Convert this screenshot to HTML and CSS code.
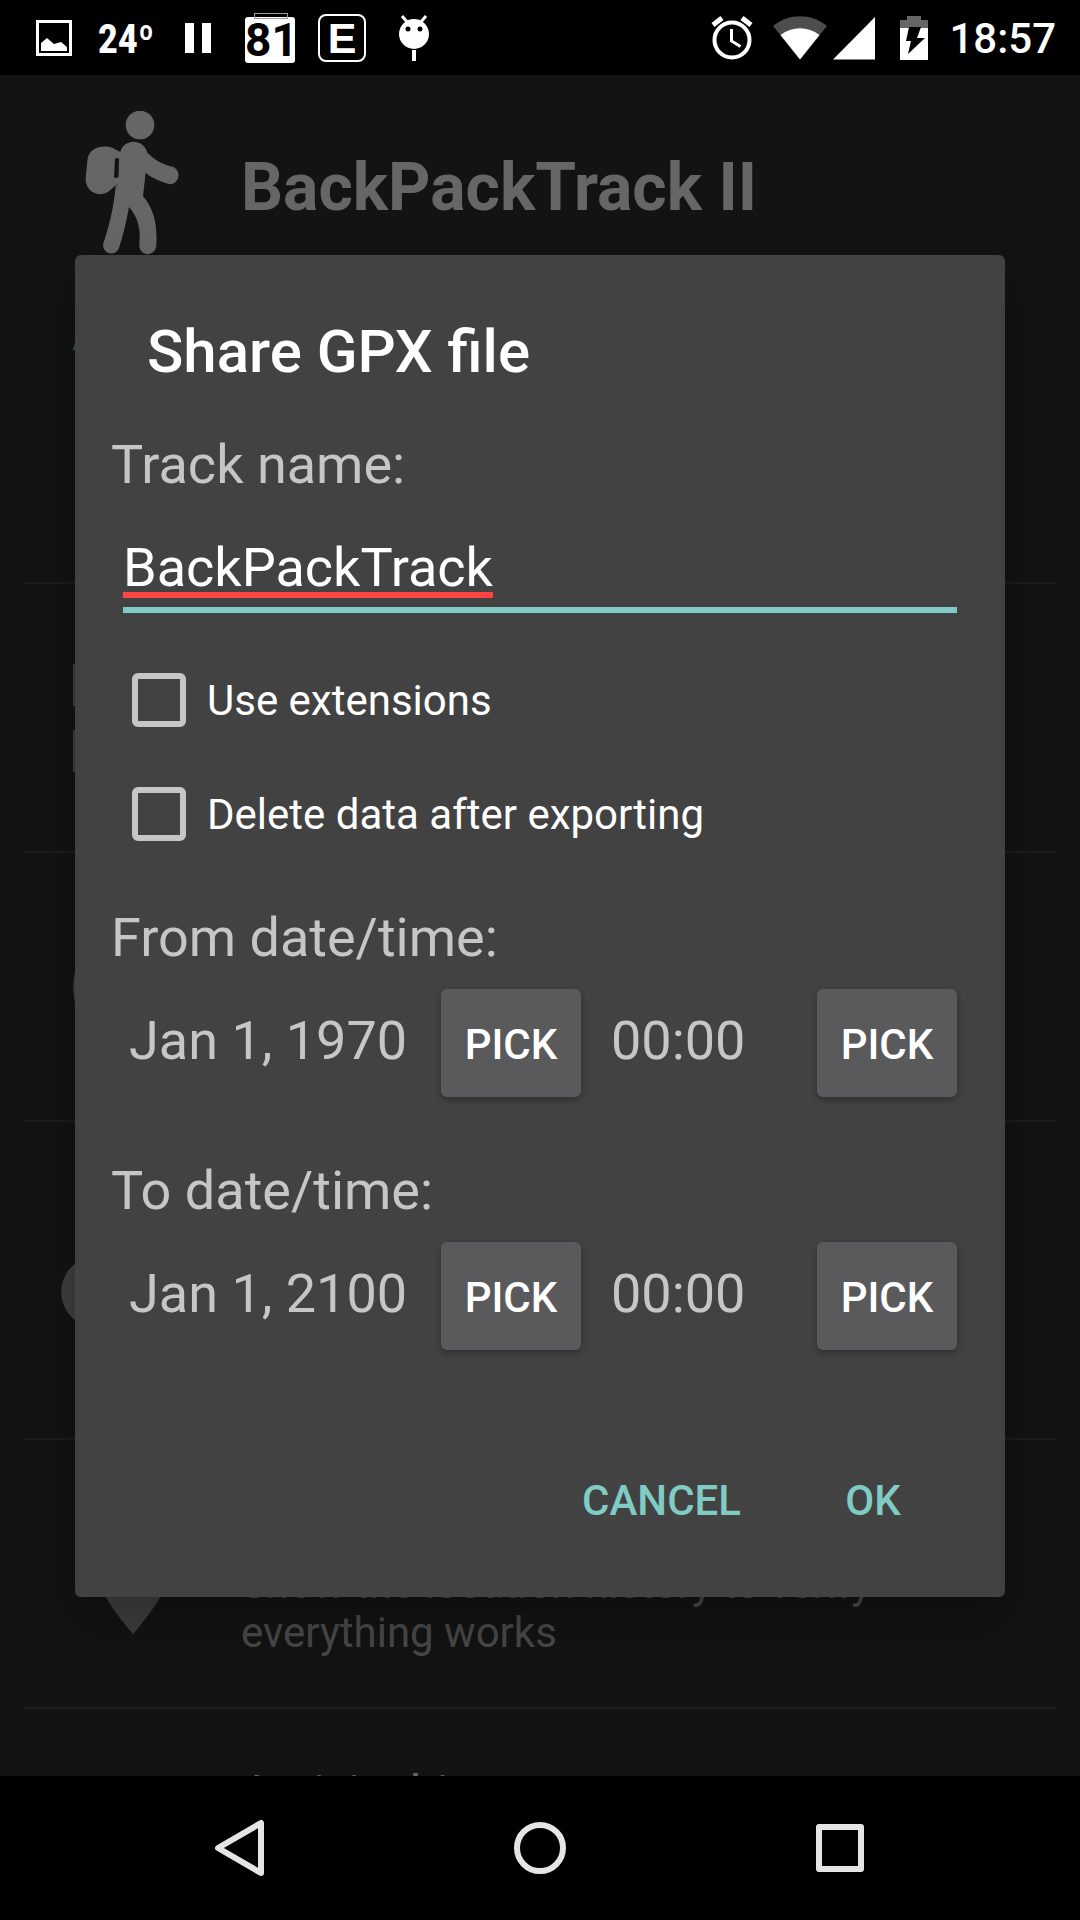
FILE: index.html
```html
<!DOCTYPE html>
<html lang="en">
<head>
<meta charset="utf-8">
<meta name="viewport" content="width=device-width, initial-scale=1">
<title>BackPackTrack II</title>
<link rel="stylesheet" href="styles.css">
</head>
<body>
<div class="screen">
  <header class="status">
    <div class="notifications">
      <svg class="slot" viewBox="0 0 72 72"><path d="M19.500 19.500h33v33h-33z" fill="none" stroke="#fff" stroke-width="3"/><path d="M23 49V41l6-5 7 6 7-2 6 5v4z" fill="#fff"/></svg>
      <span class="slot temperature">24º</span>
      <svg class="slot" viewBox="0 0 72 72"><path d="M23 21h9v30h-9zM40 21h9v30h-9z" fill="#fff"/></svg>
      <span class="slot"><span class="battery-level">81</span></span>
      <span class="slot"><span class="edge">E</span></span>
      <svg class="slot" viewBox="0 0 72 72"><path d="M24 14l6 7M48 14l-6 7" stroke="#fff" stroke-width="3"/><path d="M36 48v11" stroke="#fff" stroke-width="4"/><circle cx="36" cy="32" r="15" fill="#fff"/><circle cx="30" cy="27" r="2.500"/><circle cx="42" cy="27" r="2.500"/></svg>
    </div>
    <div class="system">
      <svg width="42" height="44" viewBox="0 0 42 44" fill="none" stroke="#fff"><circle cx="21" cy="24" r="17.500" stroke-width="4"/><path d="M20.500 13v12l9 5.500" stroke-width="3"/><path d="M2 9l9-7M40 9l-9-7" stroke-width="5"/></svg>
      <div class="signals">
        <svg width="54" height="44" viewBox="0 0 54 44"><path d="M27 43.500L0 10C16-3 38-3 54 10z" fill="#4d4d4d"/><path d="M27 43.500L7.500 19C19 10 35 10 46.500 19z" fill="#fff"/></svg>
        <svg width="42" height="44" viewBox="0 0 42 44"><path d="M42 1v42.500H0z" fill="#fff"/></svg>
      </div>
      <svg width="34" height="44" viewBox="2 0 34 44"><path d="M7 12V4h7V0h14v4h7v8z" fill="#666"/><path d="M7 12h28v32H7z" fill="#fff"/><path d="M16 11h12l-4 11h8L15 38l3-13h-5z"/></svg>
      <time class="clock">18:57</time>
    </div>
  </header>

  <main class="content">
    <div class="app" aria-hidden="true">
      <div class="brand">
        <svg class="icon icon-brand" viewBox="33 63 432 432">
          <circle cx="270" cy="105" r="43"/>
          <path d="M211 186C222 144 282 146 291 187C310 207 334 222 361 229A26 27 0 0 1 358 283C330 274 306 264 287 249L279 319C308 352 323 397 319 466C316 503 266 500 268 464C273 414 263 382 237 351C229 395 220 434 207 474C196 503 154 491 160 460C177 407 190 361 197 290L205 281L207 205H195V178Z"/>
          <path d="M112 213C114 160 184 164 196 179L195 205L192 264L207 262V281C190 290 184 298 175 305C146 324 105 305 107 265Z"/>
        </svg>
        <h1 class="brand-name">BackPackTrack II</h1>
      </div>
      <div class="section">A</div>
      <div class="row"><svg class="icon" viewBox="0 0 24 24"><path d="M2 3h20v7H2zM2 14h20v7H2z"/></svg></div>
      <div class="row"><svg class="icon" viewBox="0 0 24 24"><circle cx="12" cy="12" r="10"/></svg></div>
      <div class="row row-tall"><svg class="icon" viewBox="0 0 24 24"><path d="M19.350 10.040A7.490 7.490 0 0 0 5.350 8.040 6 6 0 0 0 6 20h13a5 5 0 0 0 .350-9.960z"/></svg></div>
      <div class="row"><svg class="icon" viewBox="0 0 24 24"><path d="M12 2a7 7 0 0 0-7 7c0 5.250 7 13 7 13s7-7.750 7-13a7 7 0 0 0-7-7z"/></svg>
        <p class="summary">Show the location history to verify everything works</p></div>
      <div class="row row-last"><h2 class="row-title">Activity history</h2></div>
    </div>

    <div class="overlay">
      <form class="dialog" role="dialog" aria-labelledby="dialog-title">
        <h2 class="dialog-title" id="dialog-title">Share GPX file</h2>
        <label class="caption" for="track">Track name:</label>
        <input class="track" id="track" type="text" value="BackPackTrack" spellcheck="false">
        <div class="options">
          <label class="option"><input class="box" type="checkbox"><span class="option-text">Use extensions</span></label>
          <label class="option"><input class="box" type="checkbox"><span class="option-text">Delete data after exporting</span></label>
        </div>
        <div class="range" role="group" aria-labelledby="from">
          <div class="caption" id="from">From date/time:</div>
          <div class="picker">
            <span>Jan 1, 1970</span><button class="pick" type="button">PICK</button>
            <span>00:00</span><button class="pick" type="button">PICK</button>
          </div>
        </div>
        <div class="range" role="group" aria-labelledby="to">
          <div class="caption" id="to">To date/time:</div>
          <div class="picker">
            <span>Jan 1, 2100</span><button class="pick" type="button">PICK</button>
            <span>00:00</span><button class="pick" type="button">PICK</button>
          </div>
        </div>
        <div class="actions">
          <button class="action" type="button">CANCEL</button>
          <button class="action" type="submit">OK</button>
        </div>
      </form>
    </div>
  </main>

  <nav class="navbar">
    <button class="nav-button" type="button" aria-label="Back"><svg width="60" height="60" viewBox="0 0 60 60"><path d="M51 5v50L8 30z"/></svg></button>
    <button class="nav-button" type="button" aria-label="Home"><svg width="60" height="60" viewBox="0 0 60 60"><circle cx="30" cy="30" r="23"/></svg></button>
    <button class="nav-button" type="button" aria-label="Recent apps"><svg width="60" height="60" viewBox="0 0 60 60"><path d="M9 9h42v42H9z"/></svg></button>
  </nav>
</div>
</body>
</html>
```
FILE: styles.css
```css
* { box-sizing: border-box; }

body {
  margin: 0;
  background: #000;
  color: #fff;
  font-family: Roboto, "Noto Sans", sans-serif;
}

h1, h2, p { margin: 0; }
svg { display: block; flex: none; }

button, input {
  margin: 0;
  border: 0;
  font: inherit;
  color: inherit;
  background: none;
}

.screen {
  display: flex;
  flex-direction: column;
  height: 100vh;
}

/* Status bar */
.status {
  display: flex;
  flex: none;
  justify-content: space-between;
  height: 75px;
  padding: 0 24px 0 18px;
}

.notifications { display: flex; align-items: center; }

.slot {
  display: flex;
  align-items: center;
  justify-content: center;
  width: 72px;
  height: 72px;
}

.temperature {
  padding-top: 4px;
  font: bold 40px/48px "Roboto Condensed", "Liberation Sans Narrow", "DejaVu Sans Condensed", sans-serif;
}

.battery-level {
  position: relative;
  width: 50px;
  height: 46px;
  margin-top: 4px;
  border-radius: 3px;
  background: #fff;
  color: #000;
  font-size: 46px;
  font-weight: 700;
  line-height: 46px;
  text-align: center;
}

.battery-level::before {
  content: "";
  position: absolute;
  top: -4px;
  left: 9px;
  width: 32px;
  height: 4px;
  border: 1px solid #999;
}

.edge {
  width: 48px;
  height: 48px;
  border: 2px solid #fff;
  border-radius: 8px;
  font: bold 43px/44px "Liberation Sans", sans-serif;
  text-align: center;
}

.system { display: flex; align-items: center; gap: 20px; }
.signals { display: flex; gap: 6px; }

.clock {
  padding-top: 3px;
  font-size: 42px;
  font-weight: 500;
  line-height: 48px;
}

/* Screen behind the dialog */
.content {
  position: relative;
  flex: 1;
  min-height: 0;
  overflow: hidden;
  background: #131313;
}

.app { padding: 36px 24px 0; }

.icon { width: 144px; height: 144px; fill: #3e3e3e; }
.icon-brand { fill: #666; }

.brand {
  display: flex;
  align-items: center;
  gap: 36px;
  padding-left: 37px;
}

.brand-name {
  padding-top: 9px;
  color: #666;
  font-size: 66px;
  font-weight: 700;
  line-height: 78px;
}

.section {
  height: 327px;
  padding: 56px 48px 0;
  color: #2f4b48;
  font-size: 42px;
  font-weight: 500;
  line-height: 49px;
}

.row {
  display: flex;
  align-items: center;
  gap: 36px;
  height: 269px;
  padding: 0 37px;
  border-top: 2px solid #1c1c1c;
}

.row-tall { height: 318px; }

.summary {
  align-self: flex-end;
  padding-bottom: 50px;
  color: #484848;
  font-size: 42px;
  line-height: 49px;
}

.row-last { align-items: flex-start; padding: 56px 37px 0 217px; }

.row-title {
  color: #666;
  font-size: 48px;
  font-weight: 400;
  line-height: 56px;
}

/* Dialog */
.overlay {
  position: absolute;
  inset: 0;
  display: flex;
  align-items: center;
  padding: 0 75px;
}

.dialog {
  display: flex;
  flex: 1;
  flex-direction: column;
  padding: 62px 36px 42px;
  border-radius: 6px;
  background: #424242;
  box-shadow: 0 24px 48px rgba(0, 0, 0, 0.25);
}

.dialog-title {
  padding-left: 36px;
  font-size: 60px;
  font-weight: 500;
  line-height: 70px;
}

.caption {
  color: #c6c6c6;
  font-size: 54px;
  line-height: 63px;
}

.dialog-title + .caption { margin-top: 46px; }

.track {
  height: 93px;
  margin: 24px 12px 0;
  padding: 16px 0 8px;
  border-bottom: 6px solid #80cbc4;
  border-radius: 0;
  outline: 0;
  font-size: 54px;
  line-height: 63px;
  text-decoration: underline 6px #ff4444;
  text-decoration-skip-ink: none;
  text-underline-offset: 6px;
}

.options { margin-top: 30px; }

.option {
  display: flex;
  align-items: center;
  gap: 21px;
  height: 114px;
  padding-left: 21px;
  font-size: 42px;
  line-height: 49px;
}

.option-text { padding-top: 2px; }

.box {
  appearance: none;
  width: 54px;
  height: 54px;
  border: 6px solid #c6c6c6;
  border-radius: 6px;
}

.box:checked { background: #80cbc4; }

.range { margin-top: 35px; }
.range + .range { margin-top: 62px; }

.picker {
  display: grid;
  grid-template-columns: 1fr 140px 176px 140px;
  column-gap: 30px;
  align-items: baseline;
  margin: 20px 12px 0 18px;
  color: #c6c6c6;
  font-size: 54px;
  line-height: 63px;
}

.pick {
  height: 108px;
  padding: 3px 0 0;
  border-radius: 6px;
  background: #5a5a5c;
  box-shadow: 0 3px 6px rgba(0, 0, 0, 0.3);
  color: #fff;
  font-size: 42px;
  font-weight: 500;
  line-height: 49px;
}

.actions {
  display: flex;
  justify-content: flex-end;
  gap: 12px;
  margin-top: 97px;
}

.action {
  min-width: 192px;
  height: 108px;
  padding: 0 24px;
  color: #80cbc4;
  font-size: 42px;
  font-weight: 500;
  line-height: 49px;
}

/* Navigation bar */
.navbar {
  display: grid;
  flex: none;
  grid-template-columns: repeat(3, 1fr);
  height: 144px;
  padding: 0 90px;
}

.nav-button {
  display: flex;
  align-items: center;
  justify-content: center;
  padding: 0;
}

.nav-button svg {
  fill: none;
  stroke: #e5e5e5;
  stroke-width: 6;
  stroke-linejoin: round;
}
```
